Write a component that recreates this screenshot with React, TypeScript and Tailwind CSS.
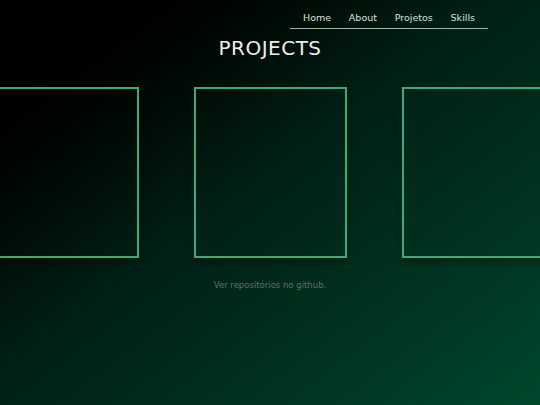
export default function App() {
  return (
    <div
      className="w-full h-[405px] overflow-hidden bg-gradient-to-br from-[#000000] via-[#011f15] via-45% to-[#00472c] text-white"
      style={{ fontFamily: '"DejaVu Sans", "Noto Sans", sans-serif' }}
    >
      {/* Nav */}
      <header className="flex justify-end pr-[52px] pt-[12px]">
        <nav className="w-[198px] border-b border-[#9fb3a9] pb-[4px]">
          <ul className="flex justify-between px-[13px] text-[9.5px] leading-[12px] text-[#d9e0dc]">
            <li>Home</li>
            <li>About</li>
            <li>Projetos</li>
            <li>Skills</li>
          </ul>
        </nav>
      </header>

      {/* Title */}
      <h1 className="mt-[7px] text-center text-[20px] leading-[24px] text-[#ececec] tracking-[0.5px]">
        PROJECTS
      </h1>

      {/* Carousel */}
      <div className="mt-[27px] flex justify-center gap-[55px]">
        <div className="shrink-0 w-[153px] h-[171px] border-2 border-[#38ad77] shadow-[0_4px_8px_rgba(0,0,0,0.35)]" />
        <div className="shrink-0 w-[153px] h-[171px] border-2 border-[#38ad77] shadow-[0_4px_8px_rgba(0,0,0,0.35)]" />
        <div className="shrink-0 w-[153px] h-[171px] border-2 border-[#38ad77] shadow-[0_4px_8px_rgba(0,0,0,0.35)]" />
      </div>

      <p className="mt-[21px] text-center text-[8.5px] leading-[12px] text-[#5f7068]">
        Ver repositórios no github.
      </p>
    </div>
  );
}
